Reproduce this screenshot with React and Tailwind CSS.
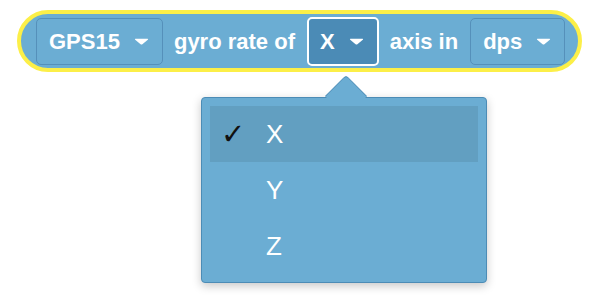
import React from "react";

const items = ["X", "Y", "Z"];

function Caret() {
  return (
    <svg width="15" height="7" viewBox="0 0 15 7" className="shrink-0">
      <path d="M1.5 0.8 H13.5 Q14.6 0.8 13.8 1.7 L8.4 6.2 Q7.5 6.9 6.6 6.2 L1.2 1.7 Q0.4 0.8 1.5 0.8 Z" fill="#ffffff" />
    </svg>
  );
}

function Field({ label, active, className }) {
  return (
    <div
      className={
        "flex shrink-0 items-center gap-[14px] rounded-[5px] " +
        (active
          ? "h-[49px] border-2 border-white bg-[#4b8bb6] pl-[11px] pr-[13px] "
          : "h-[47px] border border-[#5590ba] pl-3 pr-[13px] ") +
        (className || "")
      }
    >
      <span>{label}</span>
      <Caret />
    </div>
  );
}

export default function App() {
  return (
    <div className="h-[302px] w-[594px] bg-white pt-[10px] font-['Liberation_Sans',Arial,sans-serif]">
      <div className="ml-[17px] flex h-[62px] w-[565px] items-center rounded-full border-4 border-[#fcef48] bg-[#6badd3] pl-[15px] text-[22px] font-bold text-white">
        <Field label="GPS15" />
        <span className="ml-[11px]">gyro rate of</span>
        <Field label="X" active className="ml-[12px]" />
        <span className="ml-[11px]">axis in</span>
        <Field label="dps" className="ml-[12px]" />
      </div>

      <div className="relative ml-[201px] mt-[25px] h-[186px] w-[286px] rounded-[4px] border border-[#4c8cb6] bg-[#6badd3] p-2 shadow-[0_3px_10px_rgba(0,0,0,0.22)]">
        <div className="absolute left-[129px] top-[-17px] h-[30px] w-[30px] rotate-45 rounded-tl-[4px] border-l border-t border-[#4c8cb6] bg-[#6badd3]" />
        {items.map((item) => (
          <div
            key={item}
            className={
              "relative flex h-[56px] items-center text-[26px] text-white " +
              (item === "X" ? "bg-[#629fc1]" : "")
            }
          >
            <span className="w-[56px] pl-[11px] font-['DejaVu_Sans',sans-serif] text-[29px] leading-none text-[#111]">
              {item === "X" ? "✓" : ""}
            </span>
            <span>{item}</span>
          </div>
        ))}
      </div>
    </div>
  );
}
